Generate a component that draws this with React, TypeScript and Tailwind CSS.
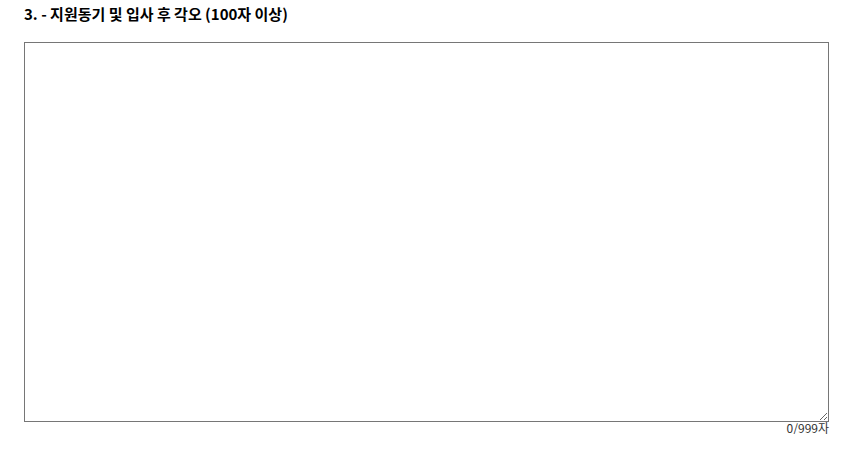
import React, { useState } from "react";

const MAX_LENGTH = 999;

const App: React.FC = () => {
  const [answer, setAnswer] = useState("");

  return (
    <main className="bg-white pt-1 pr-[27px] pl-6 font-['Noto_Sans_CJK_KR',sans-serif]">
      <label
        htmlFor="motivation"
        className="block text-[15px] leading-5 font-bold text-black"
      >
        3. - 지원동기 및 입사 후 각오 (100자 이상)
      </label>

      <textarea
        id="motivation"
        className="mt-[18px] block h-[380px] w-full resize border border-[#767676] bg-white p-2 text-sm text-black outline-none"
        maxLength={MAX_LENGTH}
        value={answer}
        onChange={(e) => setAnswer(e.target.value)}
      />

      {/* Character counter */}
      <p className="text-right text-xs leading-3 text-[#333333]">
        {answer.length}/{MAX_LENGTH}자
      </p>
    </main>
  );
};

export default App;
